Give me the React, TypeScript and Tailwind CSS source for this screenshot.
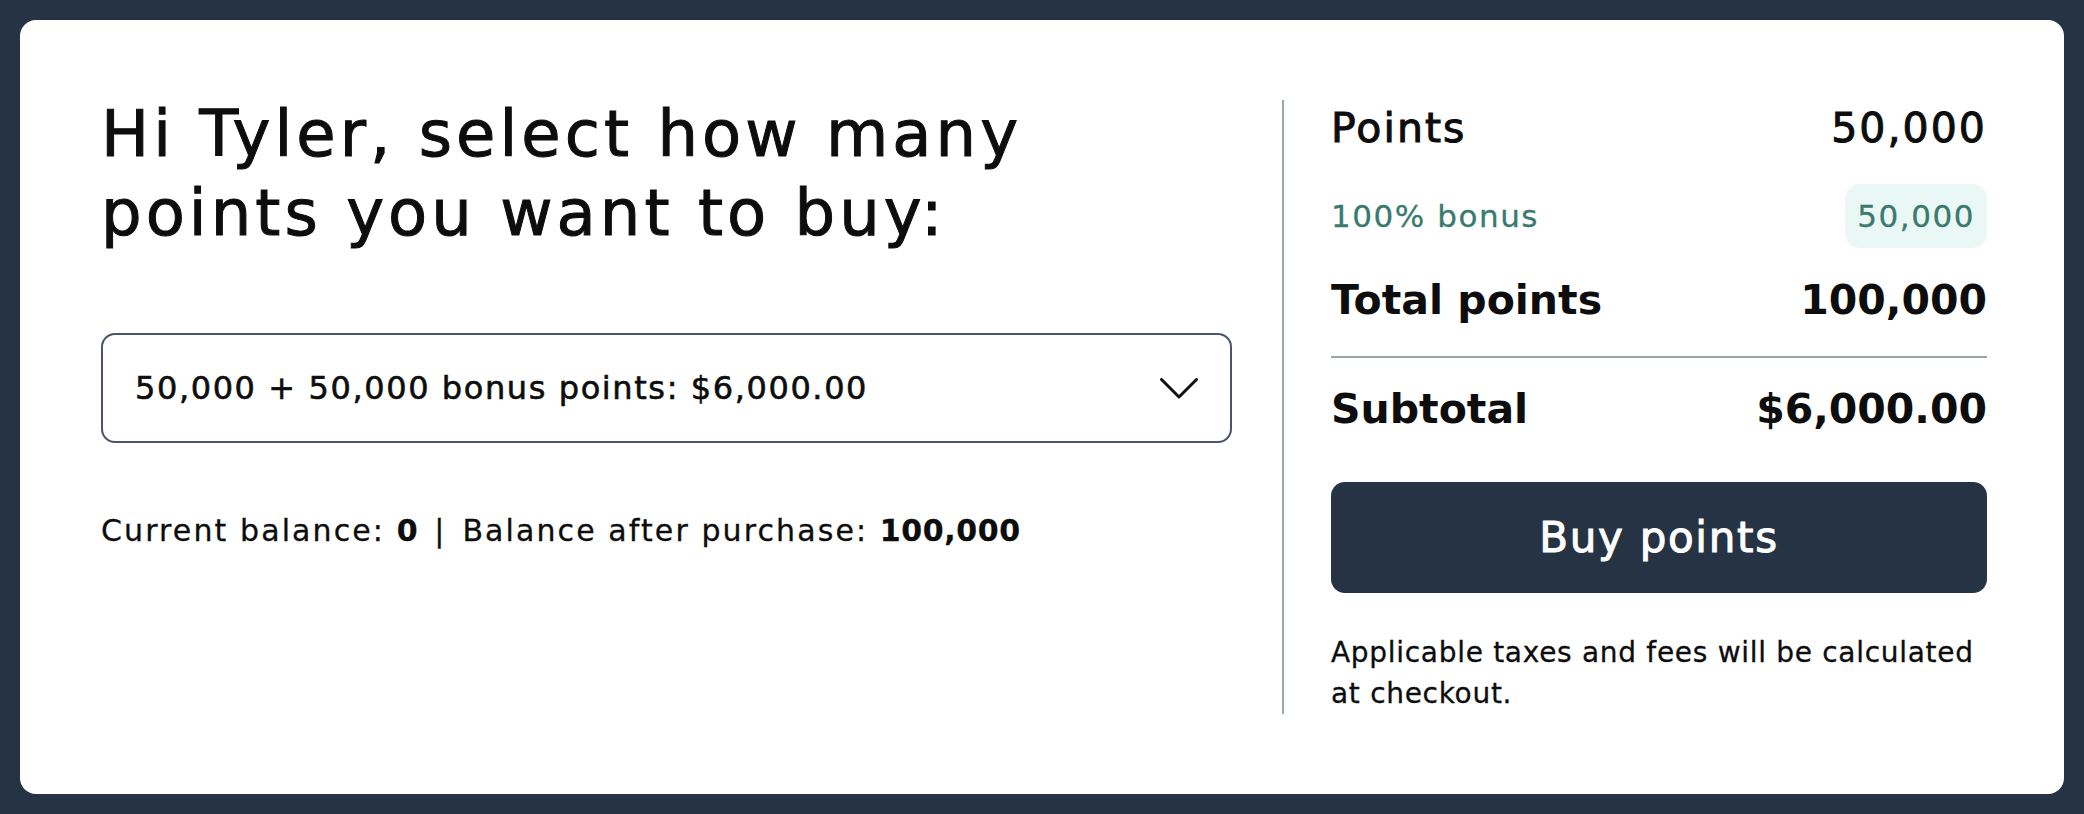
const font = { fontFamily: "'DejaVu Sans', 'Noto Sans', sans-serif" };

// DejaVu only ships Book and Bold; a thin stroke stands in for the medium weight
const medium = "[-webkit-text-stroke:1px_currentColor]";

const Row = ({ label, value, className }: { label: string; value: string; className?: string }) => (
  <div className={`flex h-[56px] items-center justify-between text-[41px] leading-[56px] text-[#0d0d0d] ${className ?? ""}`}>
    <span>{label}</span>
    <span>{value}</span>
  </div>
);

const Chevron = () => (
  <svg width="38" height="21" viewBox="0 0 38 21" fill="none" stroke="#111" strokeWidth="3" strokeLinecap="round" strokeLinejoin="round">
    <polyline points="1.5,1.5 19,19 36.5,1.5" />
  </svg>
);

export default function App() {
  return (
    <div className="min-h-screen bg-[#263344] p-5" style={font}>
      <div className="flex rounded-2xl bg-white py-20 pl-[81px] pr-[77px]">
        {/* left: picker */}
        <div className="flex-1">
          <h1 className={`-mt-[5px] text-[64px] font-normal leading-[79px] tracking-[0.063em] text-[#0d0d0d] ${medium}`}>
            Hi Tyler, select how many
            <br />
            points you want to buy:
          </h1>
          <button className="mt-[80px] flex h-[110px] w-full items-center justify-between rounded-[14px] border-2 border-[#4b5567] px-8 text-left">
            <span className="text-[32px] tracking-[0.05em] text-[#0d0d0d] [-webkit-text-stroke:0.6px_currentColor]">
              50,000 + 50,000 bonus points: $6,000.00
            </span>
            <Chevron />
          </button>
          <p className="mt-[68px] text-[30px] leading-[40px] tracking-[0.07em] text-[#0d0d0d] [-webkit-text-stroke:0.3px_currentColor]">
            Current balance: <span className="font-bold tracking-[0.02em]">0</span>
            <span className="mx-4">|</span>
            Balance after purchase: <span className="font-bold tracking-[0.02em]">100,000</span>
          </p>
        </div>

        <div className="ml-[50px] mr-[47px] w-[2px] bg-[#9ba5b4]" />

        {/* right: summary */}
        <div className="w-[656px]">
          <Row label="Points" value="50,000" className={`tracking-[0.05em] ${medium}`} />
          <div className="mt-[28px] flex h-[64px] items-center justify-between text-[31px] tracking-[0.05em] text-[#3a7a6e] [-webkit-text-stroke:0.3px_currentColor]">
            <span>100% bonus</span>
            <span className="flex h-[64px] items-center rounded-[15px] bg-[#e9f7f5] px-3">50,000</span>
          </div>
          <Row label="Total points" value="100,000" className="mt-[24px] font-bold" />
          <div className="mt-[28px] h-[2px] bg-[#9aa3ae]" />
          <Row label="Subtotal" value="$6,000.00" className="mt-[23px] font-bold" />
          <button className={`mt-[45px] flex h-[111px] w-full items-center justify-center rounded-[14px] bg-[#263344] text-[42px] tracking-[0.04em] text-white ${medium}`}>
            Buy points
          </button>
          <p className="mt-[39px] text-[28px] leading-[41px] tracking-[0.025em] text-[#0d0d0d] [-webkit-text-stroke:0.3px_currentColor]">
            Applicable taxes and fees will be calculated at checkout.
          </p>
        </div>
      </div>
    </div>
  );
}
